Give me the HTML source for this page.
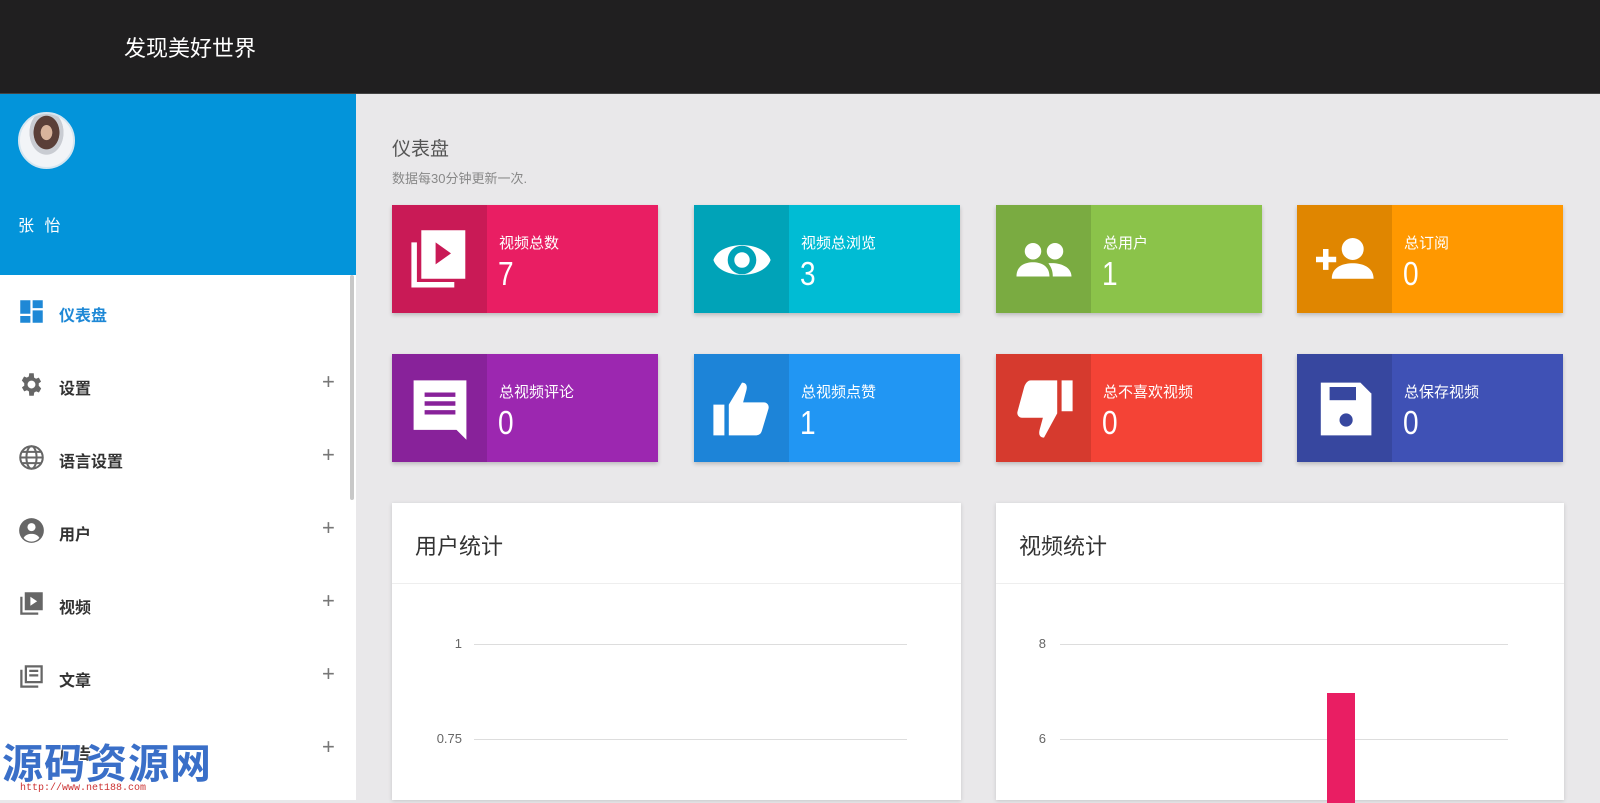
<!DOCTYPE html>
<html><head><meta charset="utf-8"><style>
*{margin:0;padding:0;box-sizing:border-box}
body{width:1600px;height:800px;overflow:hidden;background:#e9e8ea;font-family:"Liberation Sans","Noto Sans CJK SC",sans-serif;position:relative}
.hdr{position:absolute;left:0;top:0;width:1600px;height:94px;background:#201f20;border-bottom:1px solid #444}
.hdr span{position:absolute;left:124px;top:31px;color:#fff;font-size:22px}
.side{position:absolute;left:0;top:94px;width:356px;height:706px;background:#fff}
.blue{position:absolute;left:0;top:0;width:356px;height:181px;background:#0394da}
.av{position:absolute;left:18px;top:18px;width:57px;height:57px;border-radius:50%;background:radial-gradient(ellipse at 50% 35%,#d9b49c 0 15%,#5a3f38 16% 34%,#c9ccd2 35% 45%,#f2f4f7 46%);border:2px solid #d6e6f0}
.name{position:absolute;left:18px;top:118px;color:#fff;font-size:16px;letter-spacing:3px}
.item{position:absolute;left:0;width:345px;height:40px}
.item .ic{position:absolute;left:18px;top:6px;width:27px;height:27px}
.item .t{position:absolute;left:59px;top:10px;font-size:16px;color:#333;font-weight:bold}
.item .p{position:absolute;left:322px;top:4px;font-size:22px;color:#777}
.sb{position:absolute;left:350px;top:181px;width:4px;height:225px;background:#c8c8c8;border-radius:2px}
.ttl{position:absolute;left:392px;top:134px;font-size:19px;color:#555}
.sub{position:absolute;left:392px;top:168px;font-size:13px;color:#888}
.card{position:absolute;width:266px;height:108px;box-shadow:0 2px 4px rgba(0,0,0,.2)}
.card .ib{position:absolute;left:0;top:0;width:95px;height:108px}
.card .ib svg{position:absolute;left:19px;top:22px;width:58px;height:66px}
.card .l{position:absolute;left:107px;top:27px;font-size:15px;color:#fff}
.card .n{position:absolute;left:106px;top:50px;font-size:33px;color:#fff;transform:scaleX(.85);transform-origin:left}
.panel{position:absolute;top:503px;height:297px;background:#fff;box-shadow:0 1px 4px rgba(0,0,0,.15)}
.panel .h{height:81px;border-bottom:1px solid #eee;padding:26px 0 0 23px;font-size:22px;color:#333}
.gl{position:absolute;height:1px;background:#ddd}
.gt{position:absolute;font-size:13px;color:#666;text-align:right;width:40px}
.wm{position:absolute;left:2px;top:730px;font-size:41px;color:#3a6fc8;font-weight:bold;letter-spacing:1px;text-shadow:0 0 2px #fff,1px 1px 0 #fff}
.wm2{position:absolute;left:20px;top:783px;font-size:10px;color:#c33;font-family:"Liberation Mono",monospace}
</style></head><body>
<div class="hdr"><span>发现美好世界</span></div>
<div class="side">
 <div class="blue"><div class="av"></div><div class="name">张 怡</div></div>
 <div class="sb"></div>
 <div class="item" style="top:198px"><svg class="ic" viewBox="0 0 24 24"><path fill="#1e88d6" d="M2 2h9v12H2zM13 2h9v7h-9zM2 16h9v6H2zM13 11h9v11h-9z"/></svg><span class="t" style="color:#1e88d6">仪表盘</span></div>
 <div class="item" style="top:271px"><svg class="ic" viewBox="0 0 24 24"><path fill="#666" d="M19.4 13a7.5 7.5 0 000-2l2.1-1.6-2-3.5-2.5 1a7 7 0 00-1.7-1L15 2h-4l-.4 2.9a7 7 0 00-1.7 1l-2.5-1-2 3.5L6.6 11a7.5 7.5 0 000 2l-2.1 1.6 2 3.5 2.5-1a7 7 0 001.7 1L11 22h4l.4-2.9a7 7 0 001.7-1l2.5 1 2-3.5zM13 15.5a3.5 3.5 0 110-7 3.5 3.5 0 010 7z" transform="translate(-1 0)"/></svg><span class="t">设置</span><span class="p">+</span></div>
 <div class="item" style="top:344px"><svg class="ic" viewBox="0 0 24 24" fill="none" stroke="#666" stroke-width="1.8"><circle cx="12" cy="12" r="10"/><ellipse cx="12" cy="12" rx="4.5" ry="10"/><path d="M2 12h20M4 7h16M4 17h16"/></svg><span class="t">语言设置</span><span class="p">+</span></div>
 <div class="item" style="top:417px"><svg class="ic" viewBox="0 0 24 24"><circle cx="12" cy="12" r="11" fill="#666"/><circle cx="12" cy="9" r="3.6" fill="#fff"/><path d="M5 18.5c2-3 4.5-3.5 7-3.5s5 .5 7 3.5a9 9 0 01-14 0z" fill="#fff"/></svg><span class="t">用户</span><span class="p">+</span></div>
 <div class="item" style="top:490px"><svg class="ic" viewBox="0 0 24 24"><path fill="#666" d="M2 6h2v14h14v2H2zM6 2h16v16H6zm5 4v8l6-4z"/></svg><span class="t">视频</span><span class="p">+</span></div>
 <div class="item" style="top:563px"><svg class="ic" viewBox="0 0 24 24"><path fill="#666" d="M2 6h2v14h14v2H2zM6 2h16v16H6zm2 2v12h12V4zm2 2h8v2h-8zm0 4h8v2h-8z"/></svg><span class="t">文章</span><span class="p">+</span></div>
 <div class="item" style="top:636px"><span class="t">广告</span><span class="p">+</span></div>
</div>
<div class="ttl">仪表盘</div>
<div class="sub">数据每30分钟更新一次.</div>

<div class="card" style="left:392px;top:205px;background:#e91e63"><div class="ib" style="background:#c91a56"><svg viewBox="0 0 52 60"><path fill="#fff" d="M0 14h5v36h34v5H0zM9 3h40v44H9zm13 11v20l14-10z"/></svg></div><div class="l">视频总数</div><div class="n">7</div></div>
<div class="card" style="left:694px;top:205px;background:#00bcd4"><div class="ib" style="background:#00a3b8"><svg viewBox="0 0 52 60"><path fill="#fff" fill-rule="evenodd" d="M0 30C6 12 46 12 52 30 46 48 6 48 0 30zm26-13a13 13 0 100 26 13 13 0 000-26zm0 6a7 7 0 110 14 7 7 0 010-14z"/></svg></div><div class="l">视频总浏览</div><div class="n">3</div></div>
<div class="card" style="left:996px;top:205px;background:#8bc34a"><div class="ib" style="background:#7aab41"><svg viewBox="0 0 52 60"><circle cx="16" cy="22" r="7.5" fill="#fff"/><circle cx="36" cy="22" r="7.5" fill="#fff"/><path fill="#fff" d="M1 45c0-10 8-13 15-13s15 3 15 13zM34 45c0-6-2-9-4-12 8-1 21 2 21 12z"/></svg></div><div class="l">总用户</div><div class="n">1</div></div>
<div class="card" style="left:1297px;top:205px;background:#ff9800"><div class="ib" style="background:#e08600"><svg viewBox="0 0 52 60"><circle cx="33" cy="20" r="10" fill="#fff"/><path fill="#fff" d="M14 47c0-11 11-14 19-14s19 3 19 14zM6 20h5v7h7v5h-7v7H6v-7H-1v-5h7z"/></svg></div><div class="l">总订阅</div><div class="n">0</div></div>

<div class="card" style="left:392px;top:354px;background:#9c27b0"><div class="ib" style="background:#88229a"><svg viewBox="0 0 52 60"><path fill="#fff" d="M2 4h48v54l-9-9H2z"/><path fill="#88229a" d="M12 15h28v4H12zm0 8h28v4H12zm0 8h28v4H12z"/></svg></div><div class="l">总视频评论</div><div class="n">0</div></div>
<div class="card" style="left:694px;top:354px;background:#2196f3"><div class="ib" style="background:#1d84d8"><svg viewBox="0 0 52 60"><path fill="#fff" d="M0 26h10v28H0zM14 26l12-20c4 0 5 3 4 7l-3 11h19c3 0 5 3 4 6l-6 20c-1 3-3 4-6 4H14z"/></svg></div><div class="l">总视频点赞</div><div class="n">1</div></div>
<div class="card" style="left:996px;top:354px;background:#f44336"><div class="ib" style="background:#d63a2e"><svg viewBox="0 0 52 60"><path fill="#fff" d="M42 4h10v28H42zM38 4v30l-12 22c-4 0-5-3-4-7l3-11H6c-3 0-5-3-4-6L8 10c1-3 3-6 6-6z"/></svg></div><div class="l">总不喜欢视频</div><div class="n">0</div></div>
<div class="card" style="left:1297px;top:354px;background:#3f51b5"><div class="ib" style="background:#37479f"><svg viewBox="0 0 52 60"><path fill="#fff" d="M4 6h36l10 10v38H4z"/><rect x="12" y="10" width="24" height="12" fill="#37479f"/><circle cx="27" cy="40" r="6" fill="#37479f"/></svg></div><div class="l">总保存视频</div><div class="n">0</div></div>

<div class="panel" style="left:392px;width:569px"><div class="h">用户统计</div>
 <div class="gl" style="left:82px;top:141px;width:433px"></div><div class="gt" style="left:30px;top:133px">1</div>
 <div class="gl" style="left:82px;top:236px;width:433px"></div><div class="gt" style="left:30px;top:228px">0.75</div>
</div>
<div class="panel" style="left:996px;width:568px"><div class="h">视频统计</div>
 <div class="gl" style="left:64px;top:141px;width:448px"></div><div class="gt" style="left:10px;top:133px">8</div>
 <div class="gl" style="left:64px;top:236px;width:448px"></div><div class="gt" style="left:10px;top:228px">6</div>
 <div style="position:absolute;left:331px;top:190px;width:28px;height:110px;background:#e91e63"></div>
</div>
<div class="wm">源码资源网</div>
<div class="wm2">http://www.net188.com</div>
</body></html>
